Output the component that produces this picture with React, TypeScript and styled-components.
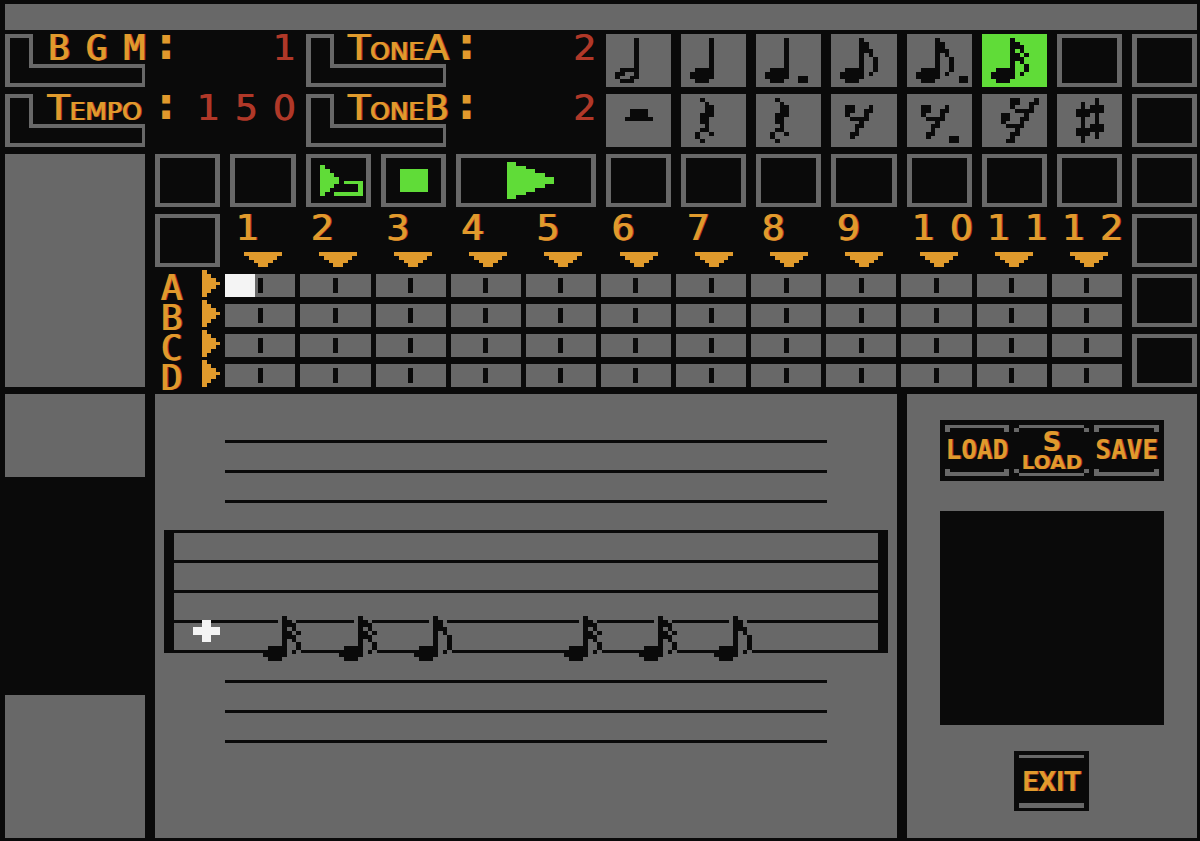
import React from "react";
import styled, { createGlobalStyle, css } from "styled-components";

const color = {
  ink: "#0a0a0a",
  panel: "#686868",
  amber: "#e09a2c",
  red: "#b03828",
  green: "#60dc38",
  white: "#f4f4f4",
};

const GlobalStyle = createGlobalStyle`
  *, *::before, *::after { box-sizing: border-box; }
  body {
    margin: 0;
    background: ${color.ink};
    font-family: "DejaVu Sans", Verdana, sans-serif;
    color: ${color.amber};
  }
  button { margin: 0; padding: 0; border: 0; font: inherit; color: inherit; border-radius: 0; cursor: pointer; }
`;

const largeAmber = css`
  font-size: 36px;
  text-shadow: 1px 0 ${color.amber}, 2px 0 ${color.red};
`;

/* Pixel sprites: "#" is painted in the current colour, "o" hides the stave behind it. */

const STEM = "......#.......";
const HEAD = ["...####.......", "..#####.......", "..#####.......", "...###........"];

const sprites = {
  half: ["", STEM, STEM, STEM, STEM, STEM, STEM, STEM, STEM, "...####", "..##..#", "..#..##", "...###", ""],
  quarter: ["", STEM, STEM, STEM, STEM, STEM, STEM, STEM, STEM, ...HEAD, ""],
  dottedQuarter: [
    "", STEM, STEM, STEM, STEM, STEM, STEM, STEM, STEM,
    "...####", "..#####", "..#####..##", "...###...##", "",
  ],
  eighth: [
    "", STEM, "......##", "......##", "......###", "......#.#", "......#..#", "......#..#",
    "......#..#", "...####..#", "..#####.#", "..#####", "...###", "",
  ],
  dottedEighth: [
    "", STEM, "......##", "......##", "......###", "......#.#", "......#..#", "......#..#",
    "......#..#", "...####..#", "..#####.#", "..#####....##", "...###.....##", "",
  ],
  sixteenth: [
    "", STEM, "......##", "......###", "......#.#", "......##.#", "......###", "......#.#",
    "......#..#", "...####..#", "..#####.#", "..#####", "...###", "",
  ],
  staveEighth: [
    "", STEM, ".....o##o", "......##", "......###", "......#.#", "......#..#", "......#..#",
    "......#..#", "...####..#", "..#####o#o", "..#####", "...###", "",
  ],
  staveSixteenth: [
    "", STEM, ".....o##o", "......###", "......#.#", "......##.#", "......###", "......#.#",
    "......#..#", "...####..#", "..#####o#o", "..#####", "...###", "",
  ],
  halfRest: ["", "", "", "", ".....####", ".....####", "....######", "", "", "", "", "", "", ""],
  quarterRest: [
    "", "....#", ".....#", ".....##", ".....##", "....###", "....##", "....##",
    ".....#", "....##", "...#..#", "...#", "....#", "",
  ],
  eighthRest: [
    "", "", "", "...##...#", "...##..##", "...#...#", "....####", "......#",
    ".....##", ".....#", "....##", "....#", "", "",
  ],
  dottedEighthRest: [
    "", "", "", "...##...#", "...##..##", "...#...#", "....####", "......#",
    ".....##", ".....#", "....##", "....#....##", ".........##", "",
  ],
  sixteenthRest: [
    "", "......##...#", "......##..##", "......#...#", ".......####", "....##...#", "....##..##",
    "....#...#", ".....####", ".......#", "......##", "......#", ".....##", "",
  ],
  sharp: [
    "", "........#", ".....#..#", ".....#.###", "....######", "....###.#", ".....#..#", ".....#..#",
    ".....#.###", "....######", "....###.#", ".....#..#", ".....#", "",
  ],
  replay: [
    "", "", "", "...#", "...##", "...###", "...####", "...####.####", "...###.....#",
    "...##......#", "...#..######", "", "", "",
  ],
  stop: ["", "", "", "", "....######", "....######", "....######", "....######", "....######", "....######", "", "", "", ""],
  play: [
    "..##", "..####", "..######", "..########", "..##########",
    "..##########", "..########", "..######", "..####", "..##",
  ],
  down: ["########", ".######.", "..####..", "...##..."],
  right: ["#...", "##..", "###.", "####", "###.", "##..", "#..."],
  cursor: ["..##..", "..##..", "######", "######", "..##..", "..##.."],
};

type SpriteName = keyof typeof sprites;

const SpriteSvg = styled.svg`
  display: block;
  flex: none;
`;

function runs(rows: string[], mark: string) {
  let d = "";
  rows.forEach((row, y) => {
    for (let x = 0; x < row.length; x++) {
      if (row[x] !== mark) continue;
      let end = x;
      while (row[end] === mark) end++;
      d += `M${x} ${y}H${end}V${y + 1}H${x}Z`;
      x = end;
    }
  });
  return d;
}

function Sprite({ name, width, height, cols = 14 }: { name: SpriteName; width: number; height: number; cols?: number }) {
  const rows = sprites[name];
  return (
    <SpriteSvg
      width={width}
      height={height}
      viewBox={`0 0 ${cols} ${rows.length}`}
      preserveAspectRatio="none"
      shapeRendering="crispEdges"
      aria-hidden="true"
    >
      <path d={runs(rows, "o")} fill={color.panel} />
      <path d={runs(rows, "#")} fill="currentColor" />
    </SpriteSvg>
  );
}

/* Page frame */

const Page = styled.main`
  display: flex;
  flex-direction: column;
  gap: 4px;
  padding: 4px 3px 3px 5px;
`;

const TitleBar = styled.header`
  height: 26px;
  background: ${color.panel};
`;

const Desk = styled.div`
  display: grid;
  grid-template-columns: repeat(16, minmax(0, 1fr));
  grid-template-rows: repeat(6, 53px) minmax(444px, auto);
  gap: 7px 10px;
`;

const SidePanel = styled.div`
  grid-column: 1 / span 2;
  grid-row: 3 / span 4;
  background: ${color.panel};
`;

/* Setting read-outs */

const Field = styled.div`
  grid-column: span 4;
  display: flex;
  align-items: flex-start;
  line-height: 27px;
`;

const FieldLabel = styled.div`
  position: relative;
  width: calc(50% - 5px);
  height: 53px;
  padding-left: 42px;
  white-space: nowrap;
  font-variant: small-caps;
  ${largeAmber}
`;

const Bracket = styled.svg`
  position: absolute;
  inset: 0;
  width: 100%;
  height: 100%;
  z-index: -1;
`;

const Colon = styled.span`
  margin-left: 12px;
  font-weight: 700;
  font-size: 44px;
  line-height: 20px;
`;

const FieldValue = styled.output`
  margin-left: auto;
  color: ${color.red};
  font-size: 36px;
  text-shadow: 1px 0 ${color.red};
`;

const Slots = styled.span<{ $letters?: boolean }>`
  display: flex;
  gap: 15px;
  ${(p) => p.$letters && css`font-family: "DejaVu Sans Mono", monospace;`}
`;

const Slot = styled.span`
  width: 23px;
  text-align: center;
`;

function Spaced({ text, letters }: { text: string; letters?: boolean }) {
  return (
    <Slots $letters={letters}>
      {text.split("").map((c, i) => (
        <Slot key={i}>{c}</Slot>
      ))}
    </Slots>
  );
}

function Setting({ label, value, spaced }: { label: string; value: string; spaced?: boolean }) {
  return (
    <Field>
      <FieldLabel>
        <Bracket viewBox="0 0 140 53" preserveAspectRatio="none" shapeRendering="crispEdges" aria-hidden="true">
          <path
            fillRule="evenodd"
            fill={color.panel}
            d="M0 0H28V30H140V53H0ZM5 4V49H137V34H24V4Z"
          />
        </Bracket>
        {spaced ? <Spaced text={label} letters /> : label}
      </FieldLabel>
      <Colon>:</Colon>
      <FieldValue aria-label={label}>
        <Spaced text={value} />
      </FieldValue>
    </Field>
  );
}

/* Buttons */

const NoteButton = styled.button<{ $active?: boolean }>`
  display: grid;
  place-items: center;
  overflow: hidden;
  background: ${(p) => (p.$active ? color.green : color.panel)};
  color: ${color.ink};
`;

const FrameButton = styled.button<{ $span?: number }>`
  grid-column: span ${(p) => p.$span ?? 1};
  display: grid;
  place-items: center;
  background: ${color.ink};
  color: ${color.green};
  position: relative;

  &::after {
    content: "";
    position: absolute;
    inset: 0;
    border: solid ${color.panel};
    border-width: 4px 5px;
  }
`;

/* Tracks */

const BarHeads = styled.div`
  grid-column: 4 / span 12;
  grid-row: 4;
  display: grid;
  grid-template-columns: repeat(12, minmax(0, 1fr));
  column-gap: 10px;
`;

const BarHead = styled.div`
  display: flex;
  flex-direction: column;
  justify-content: space-between;
  padding-left: 5px;
  line-height: 27px;
  ${largeAmber}
`;

const BarArrow = styled.div`
  display: flex;
  justify-content: center;
  padding-right: 5px;
`;

const Tracks = styled.div`
  grid-column: 3 / span 13;
  grid-row: 5 / span 2;
  display: flex;
  flex-direction: column;
  gap: 7px;
`;

const Track = styled.div`
  display: grid;
  grid-template-columns: 65px repeat(12, minmax(0, 1fr));
  column-gap: 5px;
  height: 23px;
`;

const TrackName = styled.div`
  display: flex;
  align-items: flex-end;
  justify-content: space-between;
  padding-left: 5px;
  height: 23px;
  font-family: "DejaVu Sans Mono", monospace;
  line-height: 19px;
  ${largeAmber}
`;

const Step = styled.button<{ $filled?: boolean }>`
  display: grid;
  place-items: center;
  background: ${(p) =>
    p.$filled ? `linear-gradient(to right, ${color.white} 30px, ${color.panel} 30px)` : color.panel};

  &::before {
    content: "";
    width: 5px;
    height: 15px;
    background: ${color.ink};
  }
`;

/* Lower deck */

const LowerSide = styled.div`
  grid-column: 1 / span 2;
  grid-row: 7;
  display: grid;
  grid-template-rows: 83px 1fr 143px;
`;

const Block = styled.div`
  background: ${color.panel};
  &:last-child { grid-row: 3; }
`;

const Score = styled.section`
  grid-column: 3 / span 10;
  grid-row: 7;
  position: relative;
  display: flex;
  flex-direction: column;
  gap: 27px;
  padding-top: 46px;
  background: ${color.panel};
`;

const Line = styled.div<{ $ledger?: boolean }>`
  height: 3px;
  margin: 0 ${(p) => (p.$ledger ? "70px" : "0")};
  background: ${color.ink};
`;

const Stave = styled.div`
  display: flex;
  flex-direction: column;
  gap: 27px;
  margin: 0 9px;
  border: solid ${color.ink};
  border-width: 0 10px;
`;

const Notes = styled.div`
  position: absolute;
  top: 218px;
  left: 24px;
  right: -24px;
  display: grid;
  grid-template-columns: repeat(10, minmax(0, 1fr));
  column-gap: 10px;
  color: ${color.ink};
`;

const Cursor = styled.div`
  padding: 8px 0 0 14px;
  color: ${color.white};
`;

const Files = styled.aside`
  grid-column: 13 / span 4;
  grid-row: 7;
  display: flex;
  flex-direction: column;
  align-items: center;
  padding: 26px 33px;
  background: ${color.panel};
`;

const FileButtons = styled.div`
  align-self: stretch;
  display: grid;
  grid-template-columns: minmax(0, 1fr) 75px minmax(0, 1fr);
  gap: 5px;
  padding: 5px;
  height: 61px;
  background: ${color.ink};
`;

const FileButton = styled.button`
  position: relative;
  background: ${color.ink};
  font-family: "DejaVu Sans Mono", monospace;
  font-weight: 700;
  font-size: 26px;
  line-height: 51px;
  text-shadow: 1px 0 ${color.red};

  &::before, &::after {
    content: "";
    position: absolute;
    left: 0;
    right: 0;
    height: 7px;
    border: solid ${color.panel};
  }
  &::before { top: 0; border-width: 3px 5px 0; }
  &::after { bottom: 0; border-width: 0 5px 4px; }
`;

const StepLoadButton = styled.button`
  display: grid;
  grid-template-rows: 7px 23px 14px 7px;
  background: ${color.ink};
  font-weight: 700;
  font-size: 20px;
  line-height: 14px;
  text-shadow: 1px 0 ${color.red};
`;

const StepMark = styled.span`
  font-size: 26px;
  line-height: 20px;
`;

const Cap = styled.span<{ $bottom?: boolean }>`
  transform: ${(p) => (p.$bottom ? "scaleY(-1)" : "none")};
  background:
    linear-gradient(${color.panel}, ${color.panel}) 5px 0 / calc(100% - 10px) 3px no-repeat,
    linear-gradient(${color.panel}, ${color.panel}) 0 3px / 5px 4px no-repeat,
    linear-gradient(${color.panel}, ${color.panel}) 100% 3px / 5px 4px no-repeat;
`;

const FileList = styled.div`
  align-self: stretch;
  height: 214px;
  margin: 30px 0 26px;
  background: ${color.ink};
`;

const ExitButton = styled.button`
  width: 75px;
  height: 60px;
  border: solid ${color.ink};
  border-width: 4px 5px 3px;
  background:
    linear-gradient(${color.panel}, ${color.panel}) 0 0 / 100% 3px no-repeat,
    linear-gradient(${color.panel}, ${color.panel}) 0 100% / 100% 5px no-repeat,
    ${color.ink};
  font-family: Roboto, "Liberation Sans", sans-serif;
  font-weight: 700;
  font-size: 28px;
  line-height: 52px;
  text-shadow: 1px 0 ${color.red};
`;

const noteRow: [SpriteName, string][] = [
  ["half", "Half note"],
  ["quarter", "Quarter note"],
  ["dottedQuarter", "Dotted quarter note"],
  ["eighth", "Eighth note"],
  ["dottedEighth", "Dotted eighth note"],
  ["sixteenth", "Sixteenth note"],
];

const restRow: [SpriteName, string][] = [
  ["halfRest", "Half rest"],
  ["quarterRest", "Quarter rest"],
  ["quarterRest", "Dotted quarter rest"],
  ["eighthRest", "Eighth rest"],
  ["dottedEighthRest", "Dotted eighth rest"],
  ["sixteenthRest", "Sixteenth rest"],
  ["sharp", "Sharp"],
];

const melody: (SpriteName | null)[] = [
  "staveSixteenth", "staveSixteenth", "staveEighth", null,
  "staveSixteenth", "staveSixteenth", "staveEighth",
];

const bars = Array.from({ length: 12 }, (_, i) => i + 1);

export default function App() {
  return (
    <>
      <GlobalStyle />
      <Page>
        <TitleBar />
        <Desk>
          <Setting label="BGM" value="1" spaced />
          <Setting label="ToneA" value="2" />
          {noteRow.map(([name, title]) => (
            <NoteButton key={title} aria-label={title} $active={name === "sixteenth"}>
              <Sprite name={name} width={66} height={53} />
            </NoteButton>
          ))}
          <FrameButton aria-label="Empty slot" />
          <FrameButton aria-label="Empty slot" />

          <Setting label="Tempo" value="150" />
          <Setting label="ToneB" value="2" />
          {restRow.map(([name, title]) => (
            <NoteButton key={title} aria-label={title}>
              <Sprite name={name} width={66} height={53} />
            </NoteButton>
          ))}
          <FrameButton aria-label="Empty slot" />

          <SidePanel />
          <FrameButton aria-label="Empty slot" />
          <FrameButton aria-label="Empty slot" />
          <FrameButton aria-label="Replay">
            <Sprite name="replay" width={66} height={53} />
          </FrameButton>
          <FrameButton aria-label="Stop">
            <Sprite name="stop" width={66} height={53} />
          </FrameButton>
          <FrameButton aria-label="Play" $span={2}>
            <Sprite name="play" width={57} height={37} cols={12} />
          </FrameButton>
          {bars.slice(0, 8).map((n) => (
            <FrameButton key={n} aria-label="Empty slot" />
          ))}

          <FrameButton aria-label="Empty slot" />
          <BarHeads>
            {bars.map((n) => (
              <BarHead key={n}>
                <Spaced text={String(n)} />
                <BarArrow>
                  <Sprite name="down" width={38} height={15} cols={8} />
                </BarArrow>
              </BarHead>
            ))}
          </BarHeads>
          <FrameButton aria-label="Empty slot" />

          <Tracks>
            {["A", "B", "C", "D"].map((name) => (
              <Track key={name}>
                <TrackName>
                  {name}
                  <Sprite name="right" width={18} height={27} cols={4} />
                </TrackName>
                {bars.map((n) => (
                  <Step key={n} aria-label={`Track ${name}, bar ${n}`} $filled={name === "A" && n === 1} />
                ))}
              </Track>
            ))}
          </Tracks>
          <FrameButton aria-label="Empty slot" />
          <FrameButton aria-label="Empty slot" />

          <LowerSide>
            <Block />
            <Block />
          </LowerSide>

          <Score aria-label="Score">
            <Line $ledger />
            <Line $ledger />
            <Line $ledger />
            <Stave>
              {[1, 2, 3, 4, 5].map((n) => (
                <Line key={n} />
              ))}
            </Stave>
            <Line $ledger />
            <Line $ledger />
            <Line $ledger />
            <Notes>
              <Cursor>
                <Sprite name="cursor" width={27} height={22} cols={6} />
              </Cursor>
              {melody.map((name, i) => (
                <div key={i}>{name && <Sprite name={name} width={66} height={53} />}</div>
              ))}
            </Notes>
          </Score>

          <Files>
            <FileButtons>
              <FileButton>LOAD</FileButton>
              <StepLoadButton>
                <Cap />
                <StepMark>S</StepMark>
                <span>LOAD</span>
                <Cap $bottom />
              </StepLoadButton>
              <FileButton>SAVE</FileButton>
            </FileButtons>
            <FileList />
            <ExitButton>EXIT</ExitButton>
          </Files>
        </Desk>
      </Page>
    </>
  );
}
